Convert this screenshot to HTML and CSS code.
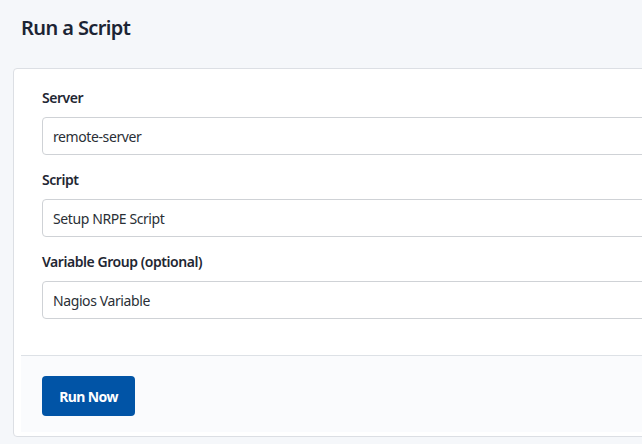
FILE: index.html
```html
<!DOCTYPE html>
<html lang="en">
<head>
<meta charset="utf-8">
<title>Run a Script</title>
<link rel="stylesheet" href="styles.css">
</head>
<body>
<div class="page">
  <h1 class="title">Run a Script</h1>
  <div class="card">
    <div class="card-body">
      <div class="group">
        <label class="label">Server</label>
        <div class="input">remote-server</div>
      </div>
      <div class="group">
        <label class="label">Script</label>
        <div class="input">Setup NRPE Script</div>
      </div>
      <div class="group">
        <label class="label">Variable Group (optional)</label>
        <div class="input">Nagios Variable</div>
      </div>
    </div>
    <div class="card-footer">
      <button class="btn">Run Now</button>
    </div>
  </div>
</div>
</body>
</html>
```

FILE: styles.css
```css
html, body {
  margin: 0;
  padding: 0;
  background: #f5f7fa;
  overflow: hidden;
  font-family: "Noto Sans", "Open Sans", "Liberation Sans", sans-serif;
  color: #212529;
}
.page {
  padding: 14px 0 0 13px;
  width: 760px;
}
.title {
  margin: 0 0 26px 8px;
  font-size: 20px;
  line-height: 28px;
  font-weight: 600;
  letter-spacing: -0.6px;
  color: #1c2434;
}
.card {
  background: #ffffff;
  border: 1px solid #dcdfe4;
  border-radius: 4px;
  padding: 0 0 4px 7px;
}
.card-body {
  padding: 19px 21px 20px 21px;
}
.group {
  display: flex;
  flex-direction: column;
  margin-bottom: 15px;
}
.group:last-child {
  margin-bottom: 16px;
}
.label {
  font-size: 14px;
  line-height: 20px;
  font-weight: 600;
  letter-spacing: -0.45px;
  color: #1f2733;
  margin-bottom: 9px;
}
.input {
  box-sizing: border-box;
  height: 38px;
  border: 1px solid #cfd2d6;
  border-radius: 4px;
  padding: 0 10px;
  display: flex;
  align-items: center;
  font-size: 14px;
  letter-spacing: -0.4px;
  color: #2a2f36;
  background: #fff;
}
.card-footer {
  border-top: 1px solid #dde1e6;
  background: #fafbfd;
  padding: 20px 21px 16px 21px;
}
.btn {
  box-sizing: border-box;
  height: 40px;
  width: 93px;
  border: none;
  border-radius: 4px;
  background: #0154a6;
  color: #ffffff;
  font-family: inherit;
  font-size: 14px;
  font-weight: 700;
  letter-spacing: -0.6px;
  padding: 0;
  cursor: pointer;
}
```
